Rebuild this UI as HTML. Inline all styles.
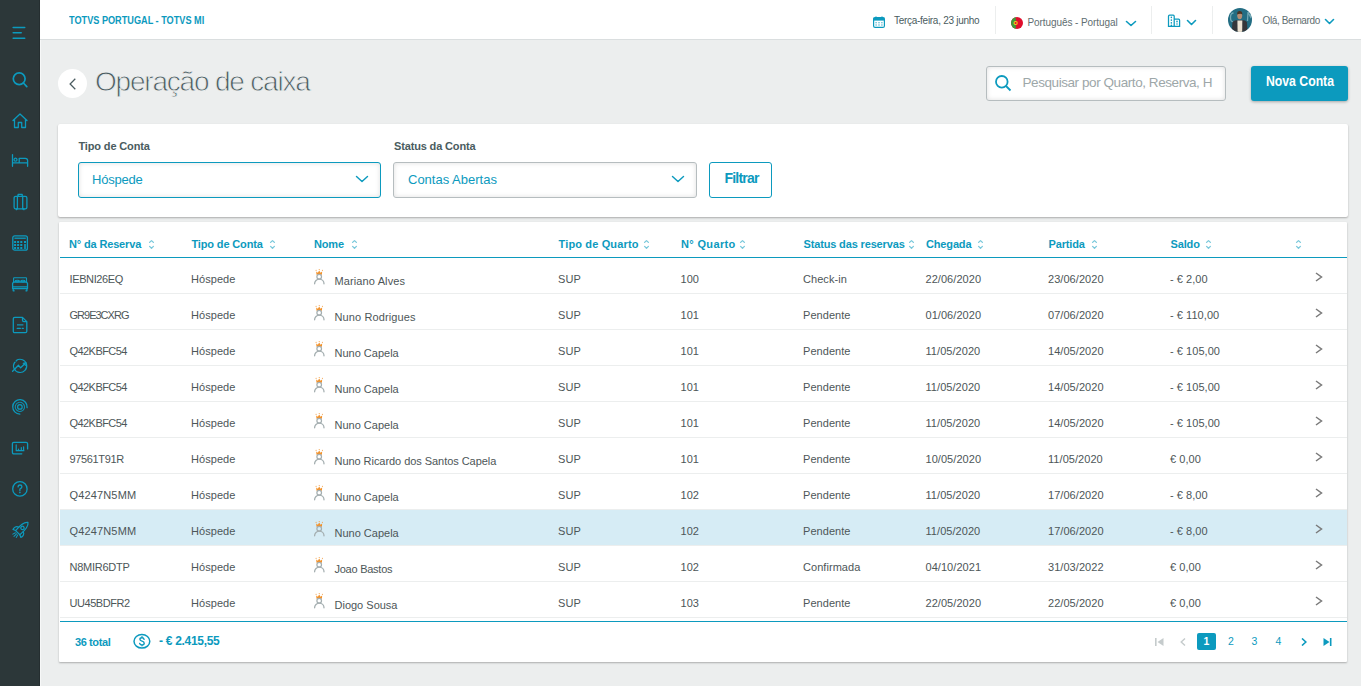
<!DOCTYPE html>
<html><head><meta charset="utf-8"><title>Operação de caixa</title><style>
*{box-sizing:border-box}
html,body{margin:0;padding:0}
body{width:1361px;height:686px;overflow:hidden;background:#eceeee;font-family:"Liberation Sans",sans-serif;position:relative;color:#4a5c60}
.a{position:absolute;white-space:nowrap}
#side{position:absolute;left:0;top:0;width:40px;height:686px;background:#2c3739;border-right:1px solid #252e30}
#side svg{position:absolute;left:12px;width:16px;height:16px;overflow:visible}
#edge{position:absolute;left:40px;top:40px;width:1px;height:646px;background:#f7f8f8}
#top{position:absolute;left:40px;top:0;width:1321px;height:40px;background:#fff;border-bottom:1px solid #dadedf}
.sep{position:absolute;top:6px;width:1px;height:28px;background:#eceeee}
.card{position:absolute;background:#fff;border-radius:2px;box-shadow:0 1px 2px rgba(0,0,0,.28)}
.lbl{font-size:11px;font-weight:700;color:#4a5c60;letter-spacing:-0.15px}
.sel{position:absolute;height:36px;border:1px solid #b6bdbf;border-radius:3px;background:#fff;box-shadow:inset 0 0 5px rgba(0,0,0,.13)}
.th{font-size:11px;font-weight:700;color:#0c9abe;top:238.5px;line-height:13px}
.td{font-size:11px;color:#3b4446;line-height:13px;letter-spacing:0px}
.row{position:absolute;left:60px;width:1287px;height:36px;border-bottom:1px solid #eceeee}
</style></head>
<body>
<div id="side"><svg class="a" style="left:12px;top:26px;width:15px;height:14px" width="15" height="14"><path d="M1.2 1.5 H12.7 M1.2 6.8 H9.2 M1.2 12.2 H12.7" stroke="#0c9abe" stroke-width="1.6" stroke-linecap="round"/></svg><svg style="top:72px" viewBox="0 0 16 16" fill="none" stroke="#0c9abe" stroke-width="1.3" stroke-linecap="round" stroke-linejoin="round"><circle cx="7.2" cy="6.8" r="5.9" stroke-width="1.7"/><path d="M11.4 11 L14.8 14.6" stroke-width="1.7"/></svg><svg style="top:112.5px" viewBox="0 0 16 16" fill="none" stroke="#0c9abe" stroke-width="1.3" stroke-linecap="round" stroke-linejoin="round"><path d="M1 7.5 L8 1 L15 7.5 M2.5 6.5 V14.5 H6.3 V9.5 H9.7 V14.5 H13.5 V6.5"/></svg><svg style="top:152.5px" viewBox="0 0 16 16" fill="none" stroke="#0c9abe" stroke-width="1.3" stroke-linecap="round" stroke-linejoin="round"><path d="M0.5 1.6 V13.3 M0.5 9.8 H15.6 V13.3 M7.2 9.8 V5.3 H13.3 Q15.6 5.3 15.6 7.6 V9.8"/><circle cx="3.5" cy="6.7" r="1.5"/></svg><svg style="top:194px" viewBox="0 0 16 16" fill="none" stroke="#0c9abe" stroke-width="1.3" stroke-linecap="round" stroke-linejoin="round"><rect x="2.1" y="2.3" width="12.8" height="12.6" rx="1.6"/><path d="M6.1 2.3 V0.4 H10.2 V2.3 M5.4 2.3 V14.9 M10.7 2.3 V14.9 M4.4 14.9 V15.7 M11.9 14.9 V15.7"/></svg><svg style="top:235px" viewBox="0 0 16 16" fill="none" stroke="#0c9abe" stroke-width="1.3" stroke-linecap="round" stroke-linejoin="round"><rect x="0.8" y="0.8" width="14.6" height="14.4" rx="2"/><rect x="2.4" y="2.5" width="11.4" height="1.5" fill="#0c9abe" stroke="none" opacity="0.85"/><g fill="#0c9abe" stroke="none"><rect x="2.1" y="6" width="2" height="2"/><rect x="5.1" y="6" width="2" height="2"/><rect x="8.3" y="6" width="2" height="2"/><rect x="12" y="6" width="2" height="2"/><rect x="2.1" y="9" width="2" height="2"/><rect x="5.1" y="9" width="2" height="2"/><rect x="8.3" y="9" width="2" height="2"/><rect x="2.1" y="12" width="2" height="2"/><rect x="5.1" y="12" width="2" height="2"/><rect x="8.3" y="12" width="2" height="2"/><rect x="12" y="9" width="2" height="5" opacity="0.8"/></g></svg><svg style="top:276.5px" viewBox="0 0 16 16" fill="none" stroke="#0c9abe" stroke-width="1.3" stroke-linecap="round" stroke-linejoin="round"><path d="M1.6 5.5 V1.2 Q1.6 0.7 2.2 0.7 H13.9 Q14.5 0.7 14.5 1.2 V5.5" stroke-width="1.1"/><path d="M0.6 6.3 L1.6 5 H14.5 L15.5 6.3 V11.6 H0.6 Z M0.6 9.8 H15.5 M1.2 11.6 V13.8 H2.2 M14.9 11.6 V13.8 H13.9"/><ellipse cx="5.3" cy="4.1" rx="2.1" ry="0.9" stroke-width="1.1"/><ellipse cx="10.9" cy="4.1" rx="2.1" ry="0.9" stroke-width="1.1"/></svg><svg style="top:317px" viewBox="0 0 16 16" fill="none" stroke="#0c9abe" stroke-width="1.3" stroke-linecap="round" stroke-linejoin="round"><path d="M2.8 0.4 H10.5 L14.8 4.6 V14.3 Q14.8 15.7 13.4 15.7 H2.7 Q1.3 15.7 1.3 14.3 V1.8 Q1.3 0.4 2.8 0.4 Z M10.5 0.4 V3.2 Q10.5 4.6 11.9 4.6 H14.8"/><rect x="5" y="7.1" width="6.4" height="1.5" fill="#0c9abe" stroke="none" opacity="0.8"/><path d="M5.2 11.4 H8.4 M10.2 11.4 H11.3" stroke-width="1.2"/></svg><svg style="top:358px" viewBox="0 0 16 16" fill="none" stroke="#0c9abe" stroke-width="1.3" stroke-linecap="round" stroke-linejoin="round"><path d="M4.2 2.6 A6.6 6.6 0 1 1 2.6 4.3" stroke-width="1.2"/><path d="M3.2 4.6 L4.6 2.9" stroke-width="1" opacity="0.7"/><path d="M0.6 13.2 L6.5 7.3 L8.6 9.8 L12.3 6.2" stroke-width="1.3"/><path d="M13.8 4.6 L10.9 5.2 L13.2 7.5 Z" fill="#0c9abe" stroke-width="0.8"/></svg><svg style="top:399px" viewBox="0 0 16 16" fill="none" stroke="#0c9abe" stroke-width="1.3" stroke-linecap="round" stroke-linejoin="round"><circle cx="7.9" cy="7.9" r="2.3" stroke-width="1.2"/><circle cx="7.9" cy="7.9" r="4.6" stroke-width="1.1" stroke-dasharray="3.2 1" opacity="0.9"/><path d="M7.9 15.1 A7.2 7.2 0 1 1 15.1 8.6" stroke-width="1.3"/></svg><svg style="top:440.5px" viewBox="0 0 16 16" fill="none" stroke="#0c9abe" stroke-width="1.3" stroke-linecap="round" stroke-linejoin="round"><path d="M9.8 12.8 H1.9 Q0.4 12.8 0.4 11.3 V2.8 Q0.4 1.3 1.9 1.3 H14.1 Q15.6 1.3 15.6 2.8 V7.9"/><path d="M4.2 3.9 V9.7 H11.9 M6.5 9.7 V8 M9.3 9.7 V6.6 M11.6 9.7 V5.9" stroke-width="1.2"/></svg><svg style="top:481px" viewBox="0 0 16 16" fill="none" stroke="#0c9abe" stroke-width="1.3" stroke-linecap="round" stroke-linejoin="round"><circle cx="7.9" cy="7.9" r="7.2" stroke-width="1.3"/><path d="M6.1 5.9 Q6.1 4 8 4 Q9.9 4 9.9 5.7 Q9.9 6.9 8.2 7.8 Q7.9 8 7.9 8.6 V9.4" stroke-width="1.3"/><path d="M7.9 11.3 V11.6" stroke-width="1.6"/></svg><svg style="top:522px" viewBox="0 0 16 16" fill="none" stroke="#0c9abe" stroke-width="1.3" stroke-linecap="round" stroke-linejoin="round"><g transform="translate(8.2 8.2) rotate(45)"><path d="M0 -11 C3.6 -8.5 3.6 -3 3 3.5 H-3 C-3.6 -3 -3.6 -8.5 0 -11 Z" stroke-width="1.2"/><circle cx="0" cy="-3.2" r="1.7" stroke-width="1.2"/><path d="M-3.1 -1 C-5.8 -0.6 -6.6 2.5 -5.6 4.6 L-3 3.5 M3.1 -1 C5.8 -0.6 6.6 2.5 5.6 4.6 L3 3.5" stroke-width="1.2"/><path d="M0 5.2 V8.8 M-1.6 5.2 L-2.4 8 M1.6 5.2 L2.4 8" stroke-width="1"/></g></svg></div>
<div id="edge"></div>
<div id="top"></div>
<div class="a" style="left:69px;top:16.00px;font-size:10px;line-height:10px;font-weight:700;color:#0c9abe;letter-spacing:0px;transform:scaleX(0.915);transform-origin:0 0">TOTVS PORTUGAL - TOTVS MI</div><svg class="a" style="left:873px;top:15.5px" width="12" height="12" viewBox="0 0 12 12"><rect x="0.6" y="1.6" width="10.8" height="9.8" rx="1.5" fill="none" stroke="#0c9abe" stroke-width="1.2"/><rect x="0.6" y="1.6" width="10.8" height="3" fill="#0c9abe"/><path d="M3 0.5 V2.5 M9 0.5 V2.5" stroke="#0c9abe" stroke-width="1.2"/><path d="M2.5 6.7h1.2M5.4 6.7h1.2M8.3 6.7h1.2M2.5 9h1.2M5.4 9h1.2M8.3 9h1.2" stroke="#0c9abe" stroke-width="1.1"/></svg><div class="a" style="left:894px;top:16.00px;font-size:10px;line-height:10px;font-weight:400;color:#4a5c60;letter-spacing:-0.28px;">Terça-feira, 23 junho</div><div class="sep" style="left:995px"></div><svg class="a" style="left:1011px;top:16.5px" width="12" height="12" viewBox="0 0 12 12"><defs><clipPath id="fc"><circle cx="6" cy="6" r="6"/></clipPath></defs><g clip-path="url(#fc)"><rect x="0" y="0" width="12" height="12" fill="#e00e2d"/><rect x="0" y="0" width="4.8" height="12" fill="#3e9a3a"/></g><circle cx="4.6" cy="6" r="2.1" fill="#f6d21a"/><circle cx="4.6" cy="6" r="1.1" fill="#e00e2d"/></svg><div class="a" style="left:1027.5px;top:18.00px;font-size:10px;line-height:10px;font-weight:400;color:#5f6e71;letter-spacing:-0.08px;">Português - Portugal</div><svg class="a" style="left:1125.5px;top:20.5px;overflow:visible" width="10" height="5"><path d="M0.5 0.5 L5.0 4.5 L9.5 0.5" fill="none" stroke="#0c9abe" stroke-width="1.6" stroke-linecap="round" stroke-linejoin="round"/></svg><div class="sep" style="left:1151px"></div><svg class="a" style="left:1167px;top:13.5px" width="14" height="14" viewBox="0 0 14 14" fill="none" stroke="#0c9abe" stroke-width="1.25"><path d="M2.5 1.2 H6.2 Q7.2 1.2 7.2 2.2 V12.4 H1.5 V2.2 Q1.5 1.2 2.5 1.2 Z M7.2 5.2 H11.6 Q12.6 5.2 12.6 6.2 V12.4 H7.2"/><path d="M4.35 3.3 V3.5 M4.35 6 V6.2 M4.35 8.8 V9 M4.35 11.3 V12 M10 7.3 V7.7 M10 9.9 V10.1" stroke-width="1.5" stroke-linecap="round"/></svg><svg class="a" style="left:1187px;top:20px;overflow:visible" width="9" height="5"><path d="M0.5 0.5 L4.5 4.5 L8.5 0.5" fill="none" stroke="#0c9abe" stroke-width="1.6" stroke-linecap="round" stroke-linejoin="round"/></svg><div class="sep" style="left:1212px"></div><svg class="a" style="left:1228px;top:8px" width="24" height="24" viewBox="0 0 24 24"><defs><clipPath id="av"><circle cx="12" cy="12" r="12"/></clipPath></defs><g clip-path="url(#av)"><rect width="24" height="24" fill="#236d83"/><path d="M5.5 5 Q2.5 5 2.5 9.5 Q2.5 14 5.5 14 M20 4 L19.5 13 M20 4 L22.5 9 L24 4" stroke="#86b6c2" stroke-width="1.3" fill="none" opacity="0.8"/><path d="M3.8 24 L4.4 14.5 Q5 12.6 8 12.2 L16 12.2 Q18.6 12.6 19 14.5 L19.6 24 Z" fill="#35363a"/><path d="M9.4 12.4 H14.3 L14.2 24 H9.6 Z" fill="#ece3d3"/><ellipse cx="11.7" cy="7.6" rx="2.5" ry="3.6" fill="#b68e74"/><path d="M9 6.4 Q9 3 11.7 3 Q14.4 3 14.4 6.4 Q12.5 5 9 6.4 Z" fill="#4a3426"/></g></svg><div class="a" style="left:1262.5px;top:16.00px;font-size:10px;line-height:10px;font-weight:400;color:#5f6e71;letter-spacing:-0.38px;">Olá, Bernardo</div><svg class="a" style="left:1324.5px;top:18.5px;overflow:visible" width="9" height="5"><path d="M0.5 0.5 L4.5 4.5 L8.5 0.5" fill="none" stroke="#0c9abe" stroke-width="1.6" stroke-linecap="round" stroke-linejoin="round"/></svg>
<div class="a" style="left:58px;top:69px;width:29px;height:29px;border-radius:50%;background:#fff"></div><svg class="a" style="left:69px;top:78px" width="8" height="12"><path d="M6.3 0.8 L1.1 6 L6.3 11.2" fill="none" stroke="#4a5c60" stroke-width="1.25"/></svg><div class="a" style="left:95px;top:68.00px;font-size:28px;line-height:28px;font-weight:400;color:#4a5c60;letter-spacing:-1.2px;-webkit-text-stroke:0.8px #eceeee">Operação de caixa</div><div class="a" style="left:986px;top:66px;width:240px;height:35px;border:1px solid #b6bdbf;border-radius:3px;background:#fff;box-shadow:inset 0 0 5px rgba(0,0,0,.13)"></div><svg class="a" style="left:995px;top:75px" width="17" height="17"><circle cx="6.8" cy="6.8" r="5.8" fill="none" stroke="#0c9abe" stroke-width="1.8"/><path d="M11 11 L15.5 15.5" stroke="#0c9abe" stroke-width="1.8"/></svg><div class="a" style="left:1022.5px;top:76.00px;font-size:13.5px;line-height:13.5px;font-weight:400;color:#9da7a9;letter-spacing:-0.43px;">Pesquisar por Quarto, Reserva, H</div><div class="a" style="left:1251px;top:66px;width:97px;height:35px;background:#0c9abe;border-radius:3px;box-shadow:0 1px 3px rgba(0,0,0,.3)"></div><div class="a" style="left:1265.5px;top:74.00px;font-size:14px;line-height:14px;font-weight:700;color:#fff;letter-spacing:0px;transform:scaleX(0.874);transform-origin:0 0">Nova Conta</div><div class="card" style="left:58px;top:124px;width:1290px;height:93px"></div><div class="a" style="left:78.5px;top:141.00px;font-size:11px;line-height:11px;font-weight:700;color:#4a5c60;letter-spacing:-0.15px;">Tipo de Conta</div><div class="a" style="left:394px;top:141.00px;font-size:11px;line-height:11px;font-weight:700;color:#4a5c60;letter-spacing:-0.15px;">Status da Conta</div><div class="sel" style="left:78px;top:162px;width:303px;border-color:#0c9abe"></div><div class="a" style="left:92px;top:173.00px;font-size:13px;line-height:13px;font-weight:400;color:#0c9abe;letter-spacing:-0.2px;">Hóspede</div><svg class="a" style="left:356px;top:176px;overflow:visible" width="12" height="6"><path d="M0.5 0.5 L6.0 5.5 L11.5 0.5" fill="none" stroke="#0c9abe" stroke-width="1.45" stroke-linecap="round" stroke-linejoin="round"/></svg><div class="sel" style="left:393px;top:162px;width:304px"></div><div class="a" style="left:408px;top:173.00px;font-size:13px;line-height:13px;font-weight:400;color:#0c9abe;letter-spacing:0px;">Contas Abertas</div><svg class="a" style="left:672px;top:176px;overflow:visible" width="12" height="6"><path d="M0.5 0.5 L6.0 5.5 L11.5 0.5" fill="none" stroke="#0c9abe" stroke-width="1.45" stroke-linecap="round" stroke-linejoin="round"/></svg><div class="a" style="left:709px;top:162px;width:63px;height:36px;border:1.5px solid #0c9abe;border-radius:3px;background:#fff"></div><div class="a" style="left:724.5px;top:171.00px;font-size:14px;line-height:14px;font-weight:700;color:#0c9abe;letter-spacing:-0.8px;">Filtrar</div><div class="card" style="left:59px;top:222px;width:1288px;height:440px;border-radius:1px"></div><div class="a" style="left:69px;top:239.00px;font-size:11px;line-height:11px;font-weight:700;color:#0c9abe;letter-spacing:-0.15px;">N° da Reserva</div><svg class="a" style="left:149.0px;top:240px;overflow:visible" width="5" height="9"><path d="M0.6 2.4 L2.5 0.6 L4.4 2.4 M0.6 6.4 L2.5 8.2 L4.4 6.4" fill="none" stroke="#0c9abe" stroke-opacity="0.55" stroke-width="1.3" stroke-linecap="round" stroke-linejoin="round"/></svg><div class="a" style="left:191.5px;top:239.00px;font-size:11px;line-height:11px;font-weight:700;color:#0c9abe;letter-spacing:-0.15px;">Tipo de Conta</div><svg class="a" style="left:270.0px;top:240px;overflow:visible" width="5" height="9"><path d="M0.6 2.4 L2.5 0.6 L4.4 2.4 M0.6 6.4 L2.5 8.2 L4.4 6.4" fill="none" stroke="#0c9abe" stroke-opacity="0.55" stroke-width="1.3" stroke-linecap="round" stroke-linejoin="round"/></svg><div class="a" style="left:314px;top:239.00px;font-size:11px;line-height:11px;font-weight:700;color:#0c9abe;letter-spacing:-0.15px;">Nome</div><svg class="a" style="left:351.5px;top:240px;overflow:visible" width="5" height="9"><path d="M0.6 2.4 L2.5 0.6 L4.4 2.4 M0.6 6.4 L2.5 8.2 L4.4 6.4" fill="none" stroke="#0c9abe" stroke-opacity="0.55" stroke-width="1.3" stroke-linecap="round" stroke-linejoin="round"/></svg><div class="a" style="left:558.5px;top:239.00px;font-size:11px;line-height:11px;font-weight:700;color:#0c9abe;letter-spacing:0.15px;">Tipo de Quarto</div><svg class="a" style="left:644.2px;top:240px;overflow:visible" width="5" height="9"><path d="M0.6 2.4 L2.5 0.6 L4.4 2.4 M0.6 6.4 L2.5 8.2 L4.4 6.4" fill="none" stroke="#0c9abe" stroke-opacity="0.55" stroke-width="1.3" stroke-linecap="round" stroke-linejoin="round"/></svg><div class="a" style="left:681px;top:239.00px;font-size:11px;line-height:11px;font-weight:700;color:#0c9abe;letter-spacing:0.35px;">N° Quarto</div><svg class="a" style="left:740.1px;top:240px;overflow:visible" width="5" height="9"><path d="M0.6 2.4 L2.5 0.6 L4.4 2.4 M0.6 6.4 L2.5 8.2 L4.4 6.4" fill="none" stroke="#0c9abe" stroke-opacity="0.55" stroke-width="1.3" stroke-linecap="round" stroke-linejoin="round"/></svg><div class="a" style="left:803.5px;top:239.00px;font-size:11px;line-height:11px;font-weight:700;color:#0c9abe;letter-spacing:-0.15px;">Status das reservas</div><svg class="a" style="left:909.0px;top:240px;overflow:visible" width="5" height="9"><path d="M0.6 2.4 L2.5 0.6 L4.4 2.4 M0.6 6.4 L2.5 8.2 L4.4 6.4" fill="none" stroke="#0c9abe" stroke-opacity="0.55" stroke-width="1.3" stroke-linecap="round" stroke-linejoin="round"/></svg><div class="a" style="left:926px;top:239.00px;font-size:11px;line-height:11px;font-weight:700;color:#0c9abe;letter-spacing:-0.15px;">Chegada</div><svg class="a" style="left:977.5px;top:240px;overflow:visible" width="5" height="9"><path d="M0.6 2.4 L2.5 0.6 L4.4 2.4 M0.6 6.4 L2.5 8.2 L4.4 6.4" fill="none" stroke="#0c9abe" stroke-opacity="0.55" stroke-width="1.3" stroke-linecap="round" stroke-linejoin="round"/></svg><div class="a" style="left:1048.5px;top:239.00px;font-size:11px;line-height:11px;font-weight:700;color:#0c9abe;letter-spacing:-0.15px;">Partida</div><svg class="a" style="left:1091.8px;top:240px;overflow:visible" width="5" height="9"><path d="M0.6 2.4 L2.5 0.6 L4.4 2.4 M0.6 6.4 L2.5 8.2 L4.4 6.4" fill="none" stroke="#0c9abe" stroke-opacity="0.55" stroke-width="1.3" stroke-linecap="round" stroke-linejoin="round"/></svg><div class="a" style="left:1170.5px;top:239.00px;font-size:11px;line-height:11px;font-weight:700;color:#0c9abe;letter-spacing:-0.15px;">Saldo</div><svg class="a" style="left:1205.8px;top:240px;overflow:visible" width="5" height="9"><path d="M0.6 2.4 L2.5 0.6 L4.4 2.4 M0.6 6.4 L2.5 8.2 L4.4 6.4" fill="none" stroke="#0c9abe" stroke-opacity="0.55" stroke-width="1.3" stroke-linecap="round" stroke-linejoin="round"/></svg><svg class="a" style="left:1296px;top:240px;overflow:visible" width="5" height="9"><path d="M0.6 2.4 L2.5 0.6 L4.4 2.4 M0.6 6.4 L2.5 8.2 L4.4 6.4" fill="none" stroke="#0c9abe" stroke-opacity="0.55" stroke-width="1.3" stroke-linecap="round" stroke-linejoin="round"/></svg><div class="a" style="left:60px;top:257px;width:1287px;height:1px;background:#0c9abe"></div><div class="row" style="top:258px;"></div><div class="a" style="left:69.5px;top:274.00px;font-size:11px;line-height:11px;font-weight:400;color:#4d5658;letter-spacing:-0.38px;">IEBNI26EQ</div><div class="a" style="left:191.0px;top:274.00px;font-size:11px;line-height:11px;font-weight:400;color:#4d5658;letter-spacing:0.05px;">Hóspede</div><svg class="a" style="left:314px;top:269px" width="12" height="16" viewBox="0 0 12 16"><path d="M2.5 5.7 L2.2 2.4 L3.9 3.7 L5.2 1.5 L6.5 3.7 L8.2 2.4 L7.9 5.7 Z" fill="#f2922b"/><circle cx="2.1" cy="1.3" r="0.55" fill="#f2922b"/><circle cx="5.2" cy="0.5" r="0.5" fill="#f2922b"/><circle cx="8.4" cy="1.3" r="0.55" fill="#f2922b"/><circle cx="5.2" cy="7.7" r="2.3" fill="none" stroke="#a5afb1" stroke-width="1.25"/><path d="M0.6 14.8 A4.7 4.7 0 0 1 10 14.8" fill="none" stroke="#a5afb1" stroke-width="1.3" stroke-linecap="round"/></svg><div class="a" style="left:334.5px;top:276.00px;font-size:11px;line-height:11px;font-weight:400;color:#4d5658;letter-spacing:0.12px;">Mariano Alves</div><div class="a" style="left:558.0px;top:274.00px;font-size:11px;line-height:11px;font-weight:400;color:#4d5658;letter-spacing:0.05px;">SUP</div><div class="a" style="left:680.5px;top:274.00px;font-size:11px;line-height:11px;font-weight:400;color:#4d5658;letter-spacing:0.05px;">100</div><div class="a" style="left:803.0px;top:274.00px;font-size:11px;line-height:11px;font-weight:400;color:#4d5658;letter-spacing:0.05px;">Check-in</div><div class="a" style="left:925.5px;top:274.00px;font-size:11px;line-height:11px;font-weight:400;color:#4d5658;letter-spacing:0.05px;">22/06/2020</div><div class="a" style="left:1048.0px;top:274.00px;font-size:11px;line-height:11px;font-weight:400;color:#4d5658;letter-spacing:0.05px;">23/06/2020</div><div class="a" style="left:1170.0px;top:274.00px;font-size:11px;line-height:11px;font-weight:400;color:#4d5658;letter-spacing:0.05px;">- € 2,00</div><svg class="a" style="left:1315px;top:271.5px" width="8" height="10"><path d="M1 1 L6.5 5 L1 9" fill="none" stroke="#7a7a7a" stroke-width="1.5"/></svg><div class="row" style="top:294px;"></div><div class="a" style="left:69.5px;top:310.00px;font-size:11px;line-height:11px;font-weight:400;color:#4d5658;letter-spacing:-0.99px;">GR9E3CXRG</div><div class="a" style="left:191.0px;top:310.00px;font-size:11px;line-height:11px;font-weight:400;color:#4d5658;letter-spacing:0.05px;">Hóspede</div><svg class="a" style="left:314px;top:305px" width="12" height="16" viewBox="0 0 12 16"><path d="M2.5 5.7 L2.2 2.4 L3.9 3.7 L5.2 1.5 L6.5 3.7 L8.2 2.4 L7.9 5.7 Z" fill="#f2922b"/><circle cx="2.1" cy="1.3" r="0.55" fill="#f2922b"/><circle cx="5.2" cy="0.5" r="0.5" fill="#f2922b"/><circle cx="8.4" cy="1.3" r="0.55" fill="#f2922b"/><circle cx="5.2" cy="7.7" r="2.3" fill="none" stroke="#a5afb1" stroke-width="1.25"/><path d="M0.6 14.8 A4.7 4.7 0 0 1 10 14.8" fill="none" stroke="#a5afb1" stroke-width="1.3" stroke-linecap="round"/></svg><div class="a" style="left:334.5px;top:312.00px;font-size:11px;line-height:11px;font-weight:400;color:#4d5658;letter-spacing:0.12px;">Nuno Rodrigues</div><div class="a" style="left:558.0px;top:310.00px;font-size:11px;line-height:11px;font-weight:400;color:#4d5658;letter-spacing:0.05px;">SUP</div><div class="a" style="left:680.5px;top:310.00px;font-size:11px;line-height:11px;font-weight:400;color:#4d5658;letter-spacing:0.05px;">101</div><div class="a" style="left:803.0px;top:310.00px;font-size:11px;line-height:11px;font-weight:400;color:#4d5658;letter-spacing:0.05px;">Pendente</div><div class="a" style="left:925.5px;top:310.00px;font-size:11px;line-height:11px;font-weight:400;color:#4d5658;letter-spacing:0.05px;">01/06/2020</div><div class="a" style="left:1048.0px;top:310.00px;font-size:11px;line-height:11px;font-weight:400;color:#4d5658;letter-spacing:0.05px;">07/06/2020</div><div class="a" style="left:1170.0px;top:310.00px;font-size:11px;line-height:11px;font-weight:400;color:#4d5658;letter-spacing:0.05px;">- € 110,00</div><svg class="a" style="left:1315px;top:307.5px" width="8" height="10"><path d="M1 1 L6.5 5 L1 9" fill="none" stroke="#7a7a7a" stroke-width="1.5"/></svg><div class="row" style="top:330px;"></div><div class="a" style="left:69.5px;top:346.00px;font-size:11px;line-height:11px;font-weight:400;color:#4d5658;letter-spacing:-0.56px;">Q42KBFC54</div><div class="a" style="left:191.0px;top:346.00px;font-size:11px;line-height:11px;font-weight:400;color:#4d5658;letter-spacing:0.05px;">Hóspede</div><svg class="a" style="left:314px;top:341px" width="12" height="16" viewBox="0 0 12 16"><path d="M2.5 5.7 L2.2 2.4 L3.9 3.7 L5.2 1.5 L6.5 3.7 L8.2 2.4 L7.9 5.7 Z" fill="#f2922b"/><circle cx="2.1" cy="1.3" r="0.55" fill="#f2922b"/><circle cx="5.2" cy="0.5" r="0.5" fill="#f2922b"/><circle cx="8.4" cy="1.3" r="0.55" fill="#f2922b"/><circle cx="5.2" cy="7.7" r="2.3" fill="none" stroke="#a5afb1" stroke-width="1.25"/><path d="M0.6 14.8 A4.7 4.7 0 0 1 10 14.8" fill="none" stroke="#a5afb1" stroke-width="1.3" stroke-linecap="round"/></svg><div class="a" style="left:334.5px;top:348.00px;font-size:11px;line-height:11px;font-weight:400;color:#4d5658;letter-spacing:0px;">Nuno Capela</div><div class="a" style="left:558.0px;top:346.00px;font-size:11px;line-height:11px;font-weight:400;color:#4d5658;letter-spacing:0.05px;">SUP</div><div class="a" style="left:680.5px;top:346.00px;font-size:11px;line-height:11px;font-weight:400;color:#4d5658;letter-spacing:0.05px;">101</div><div class="a" style="left:803.0px;top:346.00px;font-size:11px;line-height:11px;font-weight:400;color:#4d5658;letter-spacing:0.05px;">Pendente</div><div class="a" style="left:925.5px;top:346.00px;font-size:11px;line-height:11px;font-weight:400;color:#4d5658;letter-spacing:0.05px;">11/05/2020</div><div class="a" style="left:1048.0px;top:346.00px;font-size:11px;line-height:11px;font-weight:400;color:#4d5658;letter-spacing:0.05px;">14/05/2020</div><div class="a" style="left:1170.0px;top:346.00px;font-size:11px;line-height:11px;font-weight:400;color:#4d5658;letter-spacing:0.05px;">- € 105,00</div><svg class="a" style="left:1315px;top:343.5px" width="8" height="10"><path d="M1 1 L6.5 5 L1 9" fill="none" stroke="#7a7a7a" stroke-width="1.5"/></svg><div class="row" style="top:366px;"></div><div class="a" style="left:69.5px;top:382.00px;font-size:11px;line-height:11px;font-weight:400;color:#4d5658;letter-spacing:-0.56px;">Q42KBFC54</div><div class="a" style="left:191.0px;top:382.00px;font-size:11px;line-height:11px;font-weight:400;color:#4d5658;letter-spacing:0.05px;">Hóspede</div><svg class="a" style="left:314px;top:377px" width="12" height="16" viewBox="0 0 12 16"><path d="M2.5 5.7 L2.2 2.4 L3.9 3.7 L5.2 1.5 L6.5 3.7 L8.2 2.4 L7.9 5.7 Z" fill="#f2922b"/><circle cx="2.1" cy="1.3" r="0.55" fill="#f2922b"/><circle cx="5.2" cy="0.5" r="0.5" fill="#f2922b"/><circle cx="8.4" cy="1.3" r="0.55" fill="#f2922b"/><circle cx="5.2" cy="7.7" r="2.3" fill="none" stroke="#a5afb1" stroke-width="1.25"/><path d="M0.6 14.8 A4.7 4.7 0 0 1 10 14.8" fill="none" stroke="#a5afb1" stroke-width="1.3" stroke-linecap="round"/></svg><div class="a" style="left:334.5px;top:384.00px;font-size:11px;line-height:11px;font-weight:400;color:#4d5658;letter-spacing:0px;">Nuno Capela</div><div class="a" style="left:558.0px;top:382.00px;font-size:11px;line-height:11px;font-weight:400;color:#4d5658;letter-spacing:0.05px;">SUP</div><div class="a" style="left:680.5px;top:382.00px;font-size:11px;line-height:11px;font-weight:400;color:#4d5658;letter-spacing:0.05px;">101</div><div class="a" style="left:803.0px;top:382.00px;font-size:11px;line-height:11px;font-weight:400;color:#4d5658;letter-spacing:0.05px;">Pendente</div><div class="a" style="left:925.5px;top:382.00px;font-size:11px;line-height:11px;font-weight:400;color:#4d5658;letter-spacing:0.05px;">11/05/2020</div><div class="a" style="left:1048.0px;top:382.00px;font-size:11px;line-height:11px;font-weight:400;color:#4d5658;letter-spacing:0.05px;">14/05/2020</div><div class="a" style="left:1170.0px;top:382.00px;font-size:11px;line-height:11px;font-weight:400;color:#4d5658;letter-spacing:0.05px;">- € 105,00</div><svg class="a" style="left:1315px;top:379.5px" width="8" height="10"><path d="M1 1 L6.5 5 L1 9" fill="none" stroke="#7a7a7a" stroke-width="1.5"/></svg><div class="row" style="top:402px;"></div><div class="a" style="left:69.5px;top:418.00px;font-size:11px;line-height:11px;font-weight:400;color:#4d5658;letter-spacing:-0.56px;">Q42KBFC54</div><div class="a" style="left:191.0px;top:418.00px;font-size:11px;line-height:11px;font-weight:400;color:#4d5658;letter-spacing:0.05px;">Hóspede</div><svg class="a" style="left:314px;top:413px" width="12" height="16" viewBox="0 0 12 16"><path d="M2.5 5.7 L2.2 2.4 L3.9 3.7 L5.2 1.5 L6.5 3.7 L8.2 2.4 L7.9 5.7 Z" fill="#f2922b"/><circle cx="2.1" cy="1.3" r="0.55" fill="#f2922b"/><circle cx="5.2" cy="0.5" r="0.5" fill="#f2922b"/><circle cx="8.4" cy="1.3" r="0.55" fill="#f2922b"/><circle cx="5.2" cy="7.7" r="2.3" fill="none" stroke="#a5afb1" stroke-width="1.25"/><path d="M0.6 14.8 A4.7 4.7 0 0 1 10 14.8" fill="none" stroke="#a5afb1" stroke-width="1.3" stroke-linecap="round"/></svg><div class="a" style="left:334.5px;top:420.00px;font-size:11px;line-height:11px;font-weight:400;color:#4d5658;letter-spacing:0px;">Nuno Capela</div><div class="a" style="left:558.0px;top:418.00px;font-size:11px;line-height:11px;font-weight:400;color:#4d5658;letter-spacing:0.05px;">SUP</div><div class="a" style="left:680.5px;top:418.00px;font-size:11px;line-height:11px;font-weight:400;color:#4d5658;letter-spacing:0.05px;">101</div><div class="a" style="left:803.0px;top:418.00px;font-size:11px;line-height:11px;font-weight:400;color:#4d5658;letter-spacing:0.05px;">Pendente</div><div class="a" style="left:925.5px;top:418.00px;font-size:11px;line-height:11px;font-weight:400;color:#4d5658;letter-spacing:0.05px;">11/05/2020</div><div class="a" style="left:1048.0px;top:418.00px;font-size:11px;line-height:11px;font-weight:400;color:#4d5658;letter-spacing:0.05px;">14/05/2020</div><div class="a" style="left:1170.0px;top:418.00px;font-size:11px;line-height:11px;font-weight:400;color:#4d5658;letter-spacing:0.05px;">- € 105,00</div><svg class="a" style="left:1315px;top:415.5px" width="8" height="10"><path d="M1 1 L6.5 5 L1 9" fill="none" stroke="#7a7a7a" stroke-width="1.5"/></svg><div class="row" style="top:438px;"></div><div class="a" style="left:69.5px;top:454.00px;font-size:11px;line-height:11px;font-weight:400;color:#4d5658;letter-spacing:-0.35px;">97561T91R</div><div class="a" style="left:191.0px;top:454.00px;font-size:11px;line-height:11px;font-weight:400;color:#4d5658;letter-spacing:0.05px;">Hóspede</div><svg class="a" style="left:314px;top:449px" width="12" height="16" viewBox="0 0 12 16"><path d="M2.5 5.7 L2.2 2.4 L3.9 3.7 L5.2 1.5 L6.5 3.7 L8.2 2.4 L7.9 5.7 Z" fill="#f2922b"/><circle cx="2.1" cy="1.3" r="0.55" fill="#f2922b"/><circle cx="5.2" cy="0.5" r="0.5" fill="#f2922b"/><circle cx="8.4" cy="1.3" r="0.55" fill="#f2922b"/><circle cx="5.2" cy="7.7" r="2.3" fill="none" stroke="#a5afb1" stroke-width="1.25"/><path d="M0.6 14.8 A4.7 4.7 0 0 1 10 14.8" fill="none" stroke="#a5afb1" stroke-width="1.3" stroke-linecap="round"/></svg><div class="a" style="left:334.5px;top:456.00px;font-size:11px;line-height:11px;font-weight:400;color:#4d5658;letter-spacing:-0.05px;">Nuno Ricardo dos Santos Capela</div><div class="a" style="left:558.0px;top:454.00px;font-size:11px;line-height:11px;font-weight:400;color:#4d5658;letter-spacing:0.05px;">SUP</div><div class="a" style="left:680.5px;top:454.00px;font-size:11px;line-height:11px;font-weight:400;color:#4d5658;letter-spacing:0.05px;">101</div><div class="a" style="left:803.0px;top:454.00px;font-size:11px;line-height:11px;font-weight:400;color:#4d5658;letter-spacing:0.05px;">Pendente</div><div class="a" style="left:925.5px;top:454.00px;font-size:11px;line-height:11px;font-weight:400;color:#4d5658;letter-spacing:0.05px;">10/05/2020</div><div class="a" style="left:1048.0px;top:454.00px;font-size:11px;line-height:11px;font-weight:400;color:#4d5658;letter-spacing:0.05px;">11/05/2020</div><div class="a" style="left:1170.0px;top:454.00px;font-size:11px;line-height:11px;font-weight:400;color:#4d5658;letter-spacing:0.05px;">€ 0,00</div><svg class="a" style="left:1315px;top:451.5px" width="8" height="10"><path d="M1 1 L6.5 5 L1 9" fill="none" stroke="#7a7a7a" stroke-width="1.5"/></svg><div class="row" style="top:474px;"></div><div class="a" style="left:69.5px;top:490.00px;font-size:11px;line-height:11px;font-weight:400;color:#4d5658;letter-spacing:0.15px;">Q4247N5MM</div><div class="a" style="left:191.0px;top:490.00px;font-size:11px;line-height:11px;font-weight:400;color:#4d5658;letter-spacing:0.05px;">Hóspede</div><svg class="a" style="left:314px;top:485px" width="12" height="16" viewBox="0 0 12 16"><path d="M2.5 5.7 L2.2 2.4 L3.9 3.7 L5.2 1.5 L6.5 3.7 L8.2 2.4 L7.9 5.7 Z" fill="#f2922b"/><circle cx="2.1" cy="1.3" r="0.55" fill="#f2922b"/><circle cx="5.2" cy="0.5" r="0.5" fill="#f2922b"/><circle cx="8.4" cy="1.3" r="0.55" fill="#f2922b"/><circle cx="5.2" cy="7.7" r="2.3" fill="none" stroke="#a5afb1" stroke-width="1.25"/><path d="M0.6 14.8 A4.7 4.7 0 0 1 10 14.8" fill="none" stroke="#a5afb1" stroke-width="1.3" stroke-linecap="round"/></svg><div class="a" style="left:334.5px;top:492.00px;font-size:11px;line-height:11px;font-weight:400;color:#4d5658;letter-spacing:0px;">Nuno Capela</div><div class="a" style="left:558.0px;top:490.00px;font-size:11px;line-height:11px;font-weight:400;color:#4d5658;letter-spacing:0.05px;">SUP</div><div class="a" style="left:680.5px;top:490.00px;font-size:11px;line-height:11px;font-weight:400;color:#4d5658;letter-spacing:0.05px;">102</div><div class="a" style="left:803.0px;top:490.00px;font-size:11px;line-height:11px;font-weight:400;color:#4d5658;letter-spacing:0.05px;">Pendente</div><div class="a" style="left:925.5px;top:490.00px;font-size:11px;line-height:11px;font-weight:400;color:#4d5658;letter-spacing:0.05px;">11/05/2020</div><div class="a" style="left:1048.0px;top:490.00px;font-size:11px;line-height:11px;font-weight:400;color:#4d5658;letter-spacing:0.05px;">17/06/2020</div><div class="a" style="left:1170.0px;top:490.00px;font-size:11px;line-height:11px;font-weight:400;color:#4d5658;letter-spacing:0.05px;">- € 8,00</div><svg class="a" style="left:1315px;top:487.5px" width="8" height="10"><path d="M1 1 L6.5 5 L1 9" fill="none" stroke="#7a7a7a" stroke-width="1.5"/></svg><div class="row" style="top:510px;background:#d6ecf5;"></div><div class="a" style="left:69.5px;top:526.00px;font-size:11px;line-height:11px;font-weight:400;color:#4d5658;letter-spacing:0.15px;">Q4247N5MM</div><div class="a" style="left:191.0px;top:526.00px;font-size:11px;line-height:11px;font-weight:400;color:#4d5658;letter-spacing:0.05px;">Hóspede</div><svg class="a" style="left:314px;top:521px" width="12" height="16" viewBox="0 0 12 16"><path d="M2.5 5.7 L2.2 2.4 L3.9 3.7 L5.2 1.5 L6.5 3.7 L8.2 2.4 L7.9 5.7 Z" fill="#f2922b"/><circle cx="2.1" cy="1.3" r="0.55" fill="#f2922b"/><circle cx="5.2" cy="0.5" r="0.5" fill="#f2922b"/><circle cx="8.4" cy="1.3" r="0.55" fill="#f2922b"/><circle cx="5.2" cy="7.7" r="2.3" fill="none" stroke="#a5afb1" stroke-width="1.25"/><path d="M0.6 14.8 A4.7 4.7 0 0 1 10 14.8" fill="none" stroke="#a5afb1" stroke-width="1.3" stroke-linecap="round"/></svg><div class="a" style="left:334.5px;top:528.00px;font-size:11px;line-height:11px;font-weight:400;color:#4d5658;letter-spacing:0px;">Nuno Capela</div><div class="a" style="left:558.0px;top:526.00px;font-size:11px;line-height:11px;font-weight:400;color:#4d5658;letter-spacing:0.05px;">SUP</div><div class="a" style="left:680.5px;top:526.00px;font-size:11px;line-height:11px;font-weight:400;color:#4d5658;letter-spacing:0.05px;">102</div><div class="a" style="left:803.0px;top:526.00px;font-size:11px;line-height:11px;font-weight:400;color:#4d5658;letter-spacing:0.05px;">Pendente</div><div class="a" style="left:925.5px;top:526.00px;font-size:11px;line-height:11px;font-weight:400;color:#4d5658;letter-spacing:0.05px;">11/05/2020</div><div class="a" style="left:1048.0px;top:526.00px;font-size:11px;line-height:11px;font-weight:400;color:#4d5658;letter-spacing:0.05px;">17/06/2020</div><div class="a" style="left:1170.0px;top:526.00px;font-size:11px;line-height:11px;font-weight:400;color:#4d5658;letter-spacing:0.05px;">- € 8,00</div><svg class="a" style="left:1315px;top:523.5px" width="8" height="10"><path d="M1 1 L6.5 5 L1 9" fill="none" stroke="#7a7a7a" stroke-width="1.5"/></svg><div class="row" style="top:546px;"></div><div class="a" style="left:69.5px;top:562.00px;font-size:11px;line-height:11px;font-weight:400;color:#4d5658;letter-spacing:-0.25px;">N8MIR6DTP</div><div class="a" style="left:191.0px;top:562.00px;font-size:11px;line-height:11px;font-weight:400;color:#4d5658;letter-spacing:0.05px;">Hóspede</div><svg class="a" style="left:314px;top:557px" width="12" height="16" viewBox="0 0 12 16"><path d="M2.5 5.7 L2.2 2.4 L3.9 3.7 L5.2 1.5 L6.5 3.7 L8.2 2.4 L7.9 5.7 Z" fill="#f2922b"/><circle cx="2.1" cy="1.3" r="0.55" fill="#f2922b"/><circle cx="5.2" cy="0.5" r="0.5" fill="#f2922b"/><circle cx="8.4" cy="1.3" r="0.55" fill="#f2922b"/><circle cx="5.2" cy="7.7" r="2.3" fill="none" stroke="#a5afb1" stroke-width="1.25"/><path d="M0.6 14.8 A4.7 4.7 0 0 1 10 14.8" fill="none" stroke="#a5afb1" stroke-width="1.3" stroke-linecap="round"/></svg><div class="a" style="left:334.5px;top:564.00px;font-size:11px;line-height:11px;font-weight:400;color:#4d5658;letter-spacing:-0.25px;">Joao Bastos</div><div class="a" style="left:558.0px;top:562.00px;font-size:11px;line-height:11px;font-weight:400;color:#4d5658;letter-spacing:0.05px;">SUP</div><div class="a" style="left:680.5px;top:562.00px;font-size:11px;line-height:11px;font-weight:400;color:#4d5658;letter-spacing:0.05px;">102</div><div class="a" style="left:803.0px;top:562.00px;font-size:11px;line-height:11px;font-weight:400;color:#4d5658;letter-spacing:0.05px;">Confirmada</div><div class="a" style="left:925.5px;top:562.00px;font-size:11px;line-height:11px;font-weight:400;color:#4d5658;letter-spacing:0.05px;">04/10/2021</div><div class="a" style="left:1048.0px;top:562.00px;font-size:11px;line-height:11px;font-weight:400;color:#4d5658;letter-spacing:0.05px;">31/03/2022</div><div class="a" style="left:1170.0px;top:562.00px;font-size:11px;line-height:11px;font-weight:400;color:#4d5658;letter-spacing:0.05px;">€ 0,00</div><svg class="a" style="left:1315px;top:559.5px" width="8" height="10"><path d="M1 1 L6.5 5 L1 9" fill="none" stroke="#7a7a7a" stroke-width="1.5"/></svg><div class="row" style="top:582px;"></div><div class="a" style="left:69.5px;top:598.00px;font-size:11px;line-height:11px;font-weight:400;color:#4d5658;letter-spacing:-0.44px;">UU45BDFR2</div><div class="a" style="left:191.0px;top:598.00px;font-size:11px;line-height:11px;font-weight:400;color:#4d5658;letter-spacing:0.05px;">Hóspede</div><svg class="a" style="left:314px;top:593px" width="12" height="16" viewBox="0 0 12 16"><path d="M2.5 5.7 L2.2 2.4 L3.9 3.7 L5.2 1.5 L6.5 3.7 L8.2 2.4 L7.9 5.7 Z" fill="#f2922b"/><circle cx="2.1" cy="1.3" r="0.55" fill="#f2922b"/><circle cx="5.2" cy="0.5" r="0.5" fill="#f2922b"/><circle cx="8.4" cy="1.3" r="0.55" fill="#f2922b"/><circle cx="5.2" cy="7.7" r="2.3" fill="none" stroke="#a5afb1" stroke-width="1.25"/><path d="M0.6 14.8 A4.7 4.7 0 0 1 10 14.8" fill="none" stroke="#a5afb1" stroke-width="1.3" stroke-linecap="round"/></svg><div class="a" style="left:334.5px;top:600.00px;font-size:11px;line-height:11px;font-weight:400;color:#4d5658;letter-spacing:0px;">Diogo Sousa</div><div class="a" style="left:558.0px;top:598.00px;font-size:11px;line-height:11px;font-weight:400;color:#4d5658;letter-spacing:0.05px;">SUP</div><div class="a" style="left:680.5px;top:598.00px;font-size:11px;line-height:11px;font-weight:400;color:#4d5658;letter-spacing:0.05px;">103</div><div class="a" style="left:803.0px;top:598.00px;font-size:11px;line-height:11px;font-weight:400;color:#4d5658;letter-spacing:0.05px;">Pendente</div><div class="a" style="left:925.5px;top:598.00px;font-size:11px;line-height:11px;font-weight:400;color:#4d5658;letter-spacing:0.05px;">22/05/2020</div><div class="a" style="left:1048.0px;top:598.00px;font-size:11px;line-height:11px;font-weight:400;color:#4d5658;letter-spacing:0.05px;">22/05/2020</div><div class="a" style="left:1170.0px;top:598.00px;font-size:11px;line-height:11px;font-weight:400;color:#4d5658;letter-spacing:0.05px;">€ 0,00</div><svg class="a" style="left:1315px;top:595.5px" width="8" height="10"><path d="M1 1 L6.5 5 L1 9" fill="none" stroke="#7a7a7a" stroke-width="1.5"/></svg><div class="a" style="left:60px;top:621px;width:1287px;height:1px;background:#0c9abe"></div><div class="a" style="left:75px;top:637.00px;font-size:11px;line-height:11px;font-weight:700;color:#0c9abe;letter-spacing:-0.4px;">36 total</div><svg class="a" style="left:133px;top:633px" width="18" height="17"><ellipse cx="8.9" cy="8.3" rx="7.9" ry="6.8" fill="none" stroke="#0c9abe" stroke-width="1.5"/><path d="M11.1 6.3 Q10.7 4.7 9 4.7 Q6.9 4.7 6.9 6.3 Q6.9 7.6 9 8.1 Q11.2 8.6 11.2 10.2 Q11.2 11.9 9 11.9 Q7.2 11.9 6.7 10.5 M9 3.8 V4.7 M9 11.9 V12.8" fill="none" stroke="#0c9abe" stroke-width="1.4" stroke-linecap="round"/></svg><div class="a" style="left:159px;top:635.00px;font-size:12px;line-height:12px;font-weight:700;color:#0c9abe;letter-spacing:-0.3px;">- € 2.415,55</div><svg class="a" style="left:1155px;top:638px" width="9" height="8"><path d="M0.8 0 V8" stroke="#c5cbcc" stroke-width="1.6"/><path d="M8.5 0 L2.5 4 L8.5 8 Z" fill="#c5cbcc"/></svg><svg class="a" style="left:1180px;top:638px" width="6" height="8"><path d="M5 0.5 L1.2 4 L5 7.5" fill="none" stroke="#c5cbcc" stroke-width="1.4"/></svg><div class="a" style="left:1197px;top:633px;width:19px;height:17px;background:#0c9abe;border-radius:2px"></div><div class="a" style="left:1197px;top:636.00px;font-size:10.5px;line-height:10.5px;font-weight:700;color:#fff;letter-spacing:0px;width:19px;text-align:center">1</div><div class="a" style="left:1221px;top:636.00px;font-size:10.5px;line-height:10.5px;font-weight:400;color:#0c9abe;letter-spacing:0px;width:20px;text-align:center">2</div><div class="a" style="left:1244.5px;top:636.00px;font-size:10.5px;line-height:10.5px;font-weight:400;color:#0c9abe;letter-spacing:0px;width:20px;text-align:center">3</div><div class="a" style="left:1268.5px;top:636.00px;font-size:10.5px;line-height:10.5px;font-weight:400;color:#0c9abe;letter-spacing:0px;width:20px;text-align:center">4</div><svg class="a" style="left:1300.5px;top:638px" width="6" height="8"><path d="M1 0.5 L4.8 4 L1 7.5" fill="none" stroke="#0c9abe" stroke-width="1.6"/></svg><svg class="a" style="left:1322.5px;top:638px" width="9" height="8"><path d="M0.5 0 L6.5 4 L0.5 8 Z" fill="#0c9abe"/><path d="M7.7 0 V8" stroke="#0c9abe" stroke-width="1.6"/></svg>
</body></html>
